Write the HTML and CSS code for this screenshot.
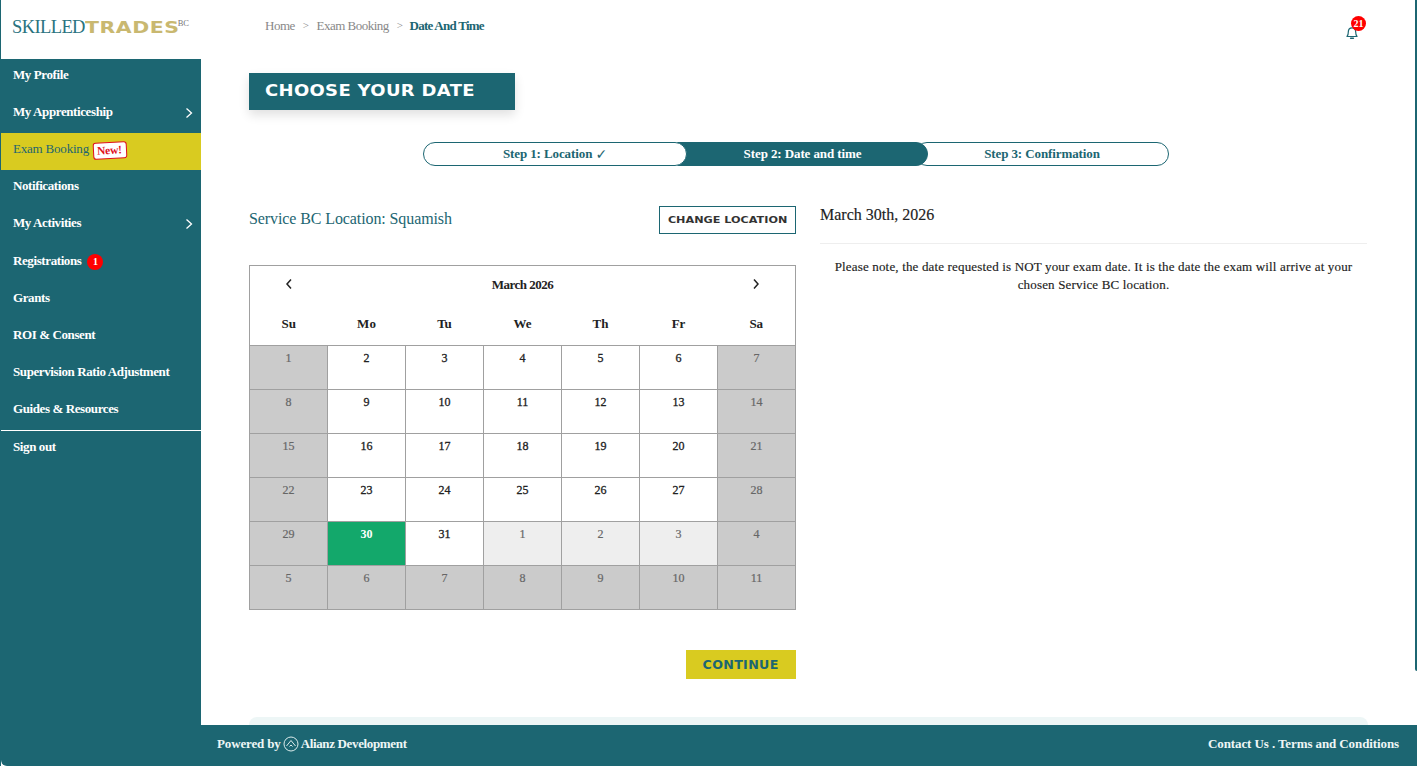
FILE: index.html
```html
<!DOCTYPE html>
<html lang="en">
<head>
<meta charset="utf-8">
<title>Choose your date</title>
<link rel="stylesheet" href="styles.css">
</head>
<body>
<div class="app">
  <div class="main">
    <aside class="sidebar">
      <div class="logo"><span class="logo-a">SKILLED</span><span class="logo-b">TRADES</span><sup class="logo-c">BC</sup></div>
      <nav class="nav">
        <a class="nav-item">My Profile</a>
        <a class="nav-item">My Apprenticeship<svg class="chev" width="8" height="12" viewBox="0 0 8 12"><path d="M1.5 1.5 6.5 6l-5 4.5" fill="none" stroke="#fff" stroke-width="1.3"/></svg></a>
        <a class="nav-item nav-active">Exam Booking<span class="new">New!</span></a>
        <a class="nav-item">Notifications</a>
        <a class="nav-item">My Activities<svg class="chev" width="8" height="12" viewBox="0 0 8 12"><path d="M1.5 1.5 6.5 6l-5 4.5" fill="none" stroke="#fff" stroke-width="1.3"/></svg></a>
        <a class="nav-item">Registrations<span class="count">1</span></a>
        <a class="nav-item">Grants</a>
        <a class="nav-item">ROI &amp; Consent</a>
        <a class="nav-item">Supervision Ratio Adjustment</a>
        <a class="nav-item nav-last">Guides &amp; Resources</a>
        <a class="nav-item nav-out">Sign out</a>
      </nav>
    </aside>
    <div class="content">
      <header class="topbar">
        <div class="crumbs"><span>Home</span><i>&gt;</i><span>Exam Booking</span><i>&gt;</i><b>Date And Time</b></div>
        <div class="bell">
          <svg width="16" height="17" viewBox="0 0 16 17"><path d="M3 12.5c1-1 1.300-2.500 1.300-4.500 0-2.500 1.500-4.200 3.700-4.200s3.700 1.700 3.700 4.200c0 2 .3 3.500 1.300 4.500z" fill="none" stroke="#1c6672" stroke-width="1.200" stroke-linejoin="round"/><path d="M6.600 14.300h2.800" stroke="#1c6672" stroke-width="1.500" stroke-linecap="round"/></svg>
          <span class="bell-count">21</span>
        </div>
      </header>
      <h1 class="title"><span class="title-text">CHOOSE YOUR DATE</span></h1>
      <div class="steps">
        <div class="step step-one">Step 1: Location&nbsp;<span class="check">✓</span></div>
        <div class="step step-two">Step 2: Date and time</div>
        <div class="step step-three">Step 3: Confirmation</div>
      </div>
      <div class="columns">
        <section class="left">
          <div class="loc-row">
            <div class="loc">Service BC Location: Squamish</div>
            <button class="change"><span class="change-text">CHANGE LOCATION</span></button>
          </div>
          <table class="cal">
            <thead>
              <tr class="cal-head"><th><svg class="cal-arrow" width="8" height="12" viewBox="0 0 8 12"><path d="M6 1.500 2 6l4 4.500" fill="none" stroke="#222" stroke-width="1.500"/></svg></th><th colspan="5" class="cal-month">March 2026</th><th><svg class="cal-arrow" width="8" height="12" viewBox="0 0 8 12"><path d="M2 1.500 6 6l-4 4.500" fill="none" stroke="#222" stroke-width="1.500"/></svg></th></tr>
              <tr class="cal-days"><th>Su</th><th>Mo</th><th>Tu</th><th>We</th><th>Th</th><th>Fr</th><th>Sa</th></tr>
            </thead>
            <tbody>
              <tr><td class="off">1</td><td>2</td><td>3</td><td>4</td><td>5</td><td>6</td><td class="off">7</td></tr>
              <tr><td class="off">8</td><td>9</td><td>10</td><td>11</td><td>12</td><td>13</td><td class="off">14</td></tr>
              <tr><td class="off">15</td><td>16</td><td>17</td><td>18</td><td>19</td><td>20</td><td class="off">21</td></tr>
              <tr><td class="off">22</td><td>23</td><td>24</td><td>25</td><td>26</td><td>27</td><td class="off">28</td></tr>
              <tr><td class="off">29</td><td class="sel">30</td><td>31</td><td class="next">1</td><td class="next">2</td><td class="next">3</td><td class="off">4</td></tr>
              <tr><td class="off">5</td><td class="off">6</td><td class="off">7</td><td class="off">8</td><td class="off">9</td><td class="off">10</td><td class="off">11</td></tr>
            </tbody>
          </table>
          <div class="actions"><button class="continue"><span class="continue-text">CONTINUE</span></button></div>
        </section>
        <section class="right">
          <h2 class="date">March 30th, 2026</h2>
          <p class="note">Please note, the date requested is NOT your exam date. It is the date the exam will arrive at your chosen Service BC location.</p>
        </section>
      </div>
      <div class="strip"></div>
    </div>
    <div class="scroll-thumb"></div>
  </div>
  <footer class="footer">
    <div class="powered"><span class="pw-a">Powered by</span>
      <svg width="16" height="16" viewBox="0 0 16 16"><circle cx="8" cy="8" r="7" fill="none" stroke="#dcecec" stroke-width="1"/><path d="M3.500 10 8 4.500l4.500 5.500M6.500 10.500 8 9l1.500 1.500" fill="none" stroke="#dcecec" stroke-width="1"/></svg>
      <span class="pw-b">Alianz Development</span></div>
    <div class="links">Contact Us . Terms and Conditions</div>
  </footer>
</div>
</body>
</html>
```
FILE: styles.css
```css
* { box-sizing: border-box; }
html, body { margin: 0; height: 100%; overflow: hidden; background: #fff; }
body { font-family: "Liberation Serif", serif; color: #222; }
.app { position: relative; width: 1417px; height: 766px; display: flex; flex-direction: column; border-left: 1px solid #1c6672; }
.main { flex: 1; display: flex; min-height: 0; overflow: hidden; }
.sidebar { width: 200px; flex: none; display: flex; flex-direction: column; }
.logo { height: 59px; padding: 17px 0 0 11px; white-space: nowrap; background: #fff; line-height: 20px; }
.logo-a { font-size: 18.500px; color: #2a7380; letter-spacing: -.6px; }
.logo-b { display: inline-block; font-family: "DejaVu Sans", sans-serif; font-weight: 700; font-size: 16px; color: #c9b870; letter-spacing: .4px; transform: scaleX(1.28); transform-origin: left center; margin-right: 19px; }
.logo-c { font-size: 8.500px; color: #777; vertical-align: 7px; line-height: 0; }
.nav { flex: 1; background: #1c6672; display: flex; flex-direction: column; }
.nav-item { height: 37.100px; flex: none; padding: 0 12px 5px; display: flex; align-items: center; color: #fff; font-size: 13px; font-weight: 700; position: relative; letter-spacing: -.4px; }
.nav-active { background: #d9cb20; color: #1f6670; font-weight: 400; letter-spacing: -.2px; }
.nav-last { height: 38px; border-bottom: 1px solid #fff; }
.nav-out { height: 32px; padding-bottom: 0; }
.chev { position: absolute; right: 8px; top: 11px; }
.new { margin-left: 4px; padding: 0 3px; height: 17px; width: 34px; line-height: 14px; font-size: 11.500px; font-weight: 700; color: #e0101c; background: #fff; border: 1.500px solid #e0101c; border-radius: 3px; transform: rotate(-3deg); white-space: nowrap; letter-spacing: -.2px; margin-top: 2px; }
.count { margin-left: 6px; width: 16px; height: 16px; border-radius: 50%; background: #f00; color: #fff; font-size: 10px; text-align: center; line-height: 16px; margin-top: 2px; letter-spacing: 0; }
.content { flex: 1; min-width: 0; padding: 0 49px 0 48px; display: flex; flex-direction: column; }
.topbar { height: 73px; flex: none; display: flex; justify-content: space-between; padding-top: 18px; }
.crumbs { margin-left: 16px; font-size: 13px; color: #888; display: flex; gap: 7px; height: 16px; line-height: 15px; letter-spacing: -.5px; }
.crumbs i { font-style: normal; font-size: 11px; margin: 0 1px; }
.crumbs b { color: #1c6672; margin-left: -1px; letter-spacing: -.75px; }
.bell { position: relative; width: 16px; height: 17px; margin: 6px 8px 0 0; }
.bell-count { position: absolute; left: 7px; top: -8px; width: 15px; height: 15px; border-radius: 50%; background: #f00; color: #fff; font-size: 10px; font-weight: 700; line-height: 15px; text-align: center; }
.title { margin: 0; width: 266px; height: 37px; flex: none; background: #1c6672; color: #fff; padding-left: 16px; font-family: "DejaVu Sans", sans-serif; font-size: 16px; font-weight: 700; line-height: 35px; letter-spacing: .3px; box-shadow: 0 5px 10px rgba(0,0,0,.12); white-space: nowrap; }
.title-text { display: inline-block; transform: scaleX(1.123); transform-origin: left center; }
.steps { flex: none; display: flex; width: 746px; height: 24px; margin: 32px 0 0 174px; }
.step { height: 24px; display: flex; align-items: center; justify-content: center; font-size: 13px; font-weight: 700; color: #1c6672; border: 1px solid #1c6672; background: #fff; letter-spacing: -.1px; }
.check { font-weight: 400; font-family: "DejaVu Sans", sans-serif; font-size: 14px; line-height: 14px; }
.step-one { width: 264px; border-radius: 12px; position: relative; z-index: 2; }
.step-two { width: 251px; margin-left: -10px; background: #1c6672; color: #fff; border-radius: 0 12px 12px 0; position: relative; z-index: 1; }
.step-three { width: 254px; margin-left: -13px; border-radius: 12px; }
.columns { flex: none; display: flex; gap: 24px; margin-top: 40px; }
.left { width: 547px; }
.loc-row { display: flex; justify-content: space-between; align-items: center; height: 28px; margin-bottom: 31px; }
.loc { font-size: 16px; color: #1c6672; letter-spacing: -.1px; padding-bottom: 2px; }
.change { width: 137px; height: 28px; padding: 0 0 1px; background: #fff; border: 1px solid #1c6672; font-family: "DejaVu Sans", sans-serif; font-size: 9.500px; font-weight: 700; color: #333; white-space: nowrap; }
.change-text { display: inline-block; transform: scaleX(1.18); }
.cal { width: 547px; height: 345px; border-collapse: collapse; table-layout: fixed; font-size: 12px; }
.cal th, .cal td { text-align: center; }
.cal-head th { height: 40px; font-size: 13px; color: #222; padding: 0 0 1px; }
.cal-month { letter-spacing: -.5px; }
.cal-arrow { position: relative; top: 1px; }
.cal-days th { height: 40px; font-size: 13px; color: #222; padding: 0 0 2px; }
.cal thead { border: 1px solid #a0a0a0; }
.cal td { height: 44px; vertical-align: top; padding: 5px 0 0; border: 1px solid #a0a0a0; font-weight: 400; -webkit-text-stroke: .3px currentColor; font-size: 12px; background: #fff; }
.cal td.off { background: #cbcbcb; color: #666; -webkit-text-stroke: .2px currentColor; }
.cal td.next { background: #eee; color: #666; -webkit-text-stroke: .2px currentColor; }
.cal td.sel { background: #13a86b; color: #fff; font-weight: 700; -webkit-text-stroke: 0; }
.actions { display: flex; justify-content: flex-end; margin-top: 40px; }
.continue { width: 110px; height: 29px; padding: 0; background: #d9cb20; border: 0; font-family: "DejaVu Sans", sans-serif; font-size: 11.500px; font-weight: 700; color: #1c6672; letter-spacing: .3px; }
.continue-text { display: inline-block; transform: scaleX(1.1); }
.right { width: 547px; }
.date { margin: 0; height: 38px; line-height: 18px; font-size: 16px; font-weight: 400; border-bottom: 1px solid #eee; -webkit-text-stroke: .15px currentColor; }
.note { margin: 14px 0 0; text-align: center; font-size: 13px; line-height: 18px; letter-spacing: .16px; padding: 0 10px; -webkit-text-stroke: .15px currentColor; }
.strip { flex: none; height: 20px; margin-top: 38px; background: #edf6f6; border-radius: 8px 8px 0 0; }
.scroll-thumb { position: absolute; right: 0; top: 0; width: 2px; height: 671px; background: #1c6672; border-radius: 0 0 0 2px; }
.footer { height: 41px; flex: none; background: #1c6672; color: #eef6f6; display: flex; justify-content: space-between; align-items: center; padding: 0 18px 4px 216px; font-size: 13px; font-weight: 700; border-radius: 0 0 0 6px; }
.powered { display: flex; align-items: center; gap: 2px; white-space: nowrap; }
.pw-a { letter-spacing: -.15px; }
.pw-b { letter-spacing: -.35px; }
.links { letter-spacing: -.1px; }
```
